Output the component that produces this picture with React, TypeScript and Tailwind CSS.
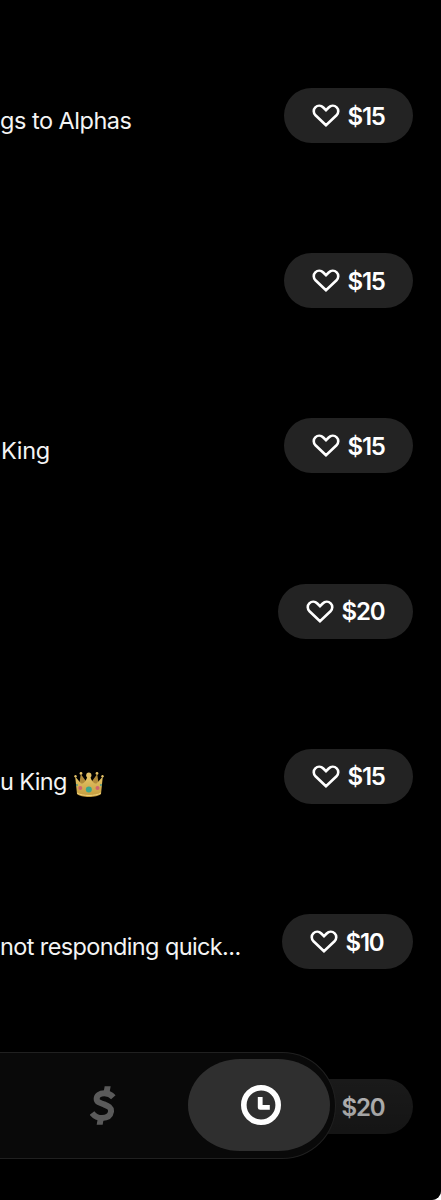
interface Payment {
  note?: string
  crown?: boolean
  tracking?: string
  amount: string
  pill: string
}

const payments: Payment[] = [
  { note: 'gs to Alphas', tracking: 'tracking-[-0.500px]', amount: '$15', pill: 'w-[129px]' },
  { amount: '$15', pill: 'w-[129px]' },
  { note: 'King', tracking: 'pl-px tracking-[-0.300px]', amount: '$15', pill: 'w-[129px]' },
  { amount: '$20', pill: 'w-[135px]' },
  { note: 'u King', tracking: 'tracking-[-0.650px]', crown: true, amount: '$15', pill: 'w-[129px]' },
  { note: 'not responding quick...', tracking: 'tracking-[-0.620px]', amount: '$10', pill: 'w-[131px]' },
  { amount: '$20', pill: 'w-[135px]' },
]

const HeartIcon = () => (
  <svg
    width="28"
    height="24"
    viewBox="0 0 28 24"
    fill="none"
    className="relative top-[0.500px] left-[0.500px] shrink-0"
    aria-hidden
  >
    <path
      d="M14 21.2 3.5 11.3C1.2 9 1.2 5.5 3.3 3.4c2.3-2.2 5.8-2.1 8 .1L14 6.2l2.7-2.7c2.2-2.2 5.7-2.3 8-.1 2.1 2.1 2.1 5.6-.2 7.9L14 21.2Z"
      stroke="currentColor"
      strokeWidth="2.6"
      strokeLinejoin="miter"
    />
  </svg>
)

const CrownIcon = () => (
  <svg width="30" height="26" viewBox="0 0 30 26" className="relative top-[2px] shrink-0" aria-hidden>
    <defs>
      <linearGradient id="crown-gold" x1="0" y1="0" x2="0" y2="1">
        <stop offset="0" stopColor="#e8c768" />
        <stop offset="1" stopColor="#c39a3c" />
      </linearGradient>
    </defs>
    <path d="M5 15 6.800 3 14 13h2l7.200-10L25 15Z" fill="#b08a3a" />
    <path
      d="M1.200 5.500 7 12.500c3 .5 5-2.500 6.800-8h2c1.800 5.500 3.800 8.500 6.800 8l6.200-7-1.800 17.500c-4 4-20 4-24 0Z"
      fill="url(#crown-gold)"
    />
    <path d="M3 22c5 3.300 19 3.300 24 0" fill="none" stroke="#f0d27c" strokeWidth="1" />
    <g fill="#e3c067">
      <circle cx="1.500" cy="5.200" r="1.200" />
      <circle cx="7" cy="2.400" r="1.400" />
      <circle cx="14.800" cy="4.200" r="2.600" />
      <circle cx="23" cy="2.400" r="1.400" />
      <circle cx="28.500" cy="5.200" r="1.200" />
    </g>
    <circle cx="14.800" cy="18.500" r="3" fill="#3da78c" />
    <circle cx="6.300" cy="17" r="2" fill="#cf6470" />
    <circle cx="23.500" cy="17" r="2" fill="#cf6470" />
    <circle cx="2.900" cy="14" r="1" fill="#48958a" />
    <circle cx="27" cy="14" r="1" fill="#48958a" />
  </svg>
)

const DollarIcon = () => (
  <svg width="26" height="39" viewBox="0 0 78 117" fill="none" aria-hidden>
    <path d="M44 1h18l-4 22H40ZM24 94h18l-4 22H20Z" fill="currentColor" />
    <path
      d="M70 34C62 25 52 22 43 22c-14 0-23 7-23 17 0 9 9 12 22 16 13 5 22 9 21 22-2 13-13 19-27 19-12 0-22-5-30-15"
      stroke="currentColor"
      strokeWidth="18"
    />
  </svg>
)

const ClockIcon = () => (
  <svg width="40" height="40" viewBox="0 0 40 40" fill="none" aria-hidden>
    <circle cx="20" cy="20" r="17.200" stroke="currentColor" strokeWidth="5.600" />
    <path d="M19.200 12v10.400h9.600" stroke="currentColor" strokeWidth="4.800" strokeLinejoin="round" />
  </svg>
)

const PaymentRow = ({ note, crown, tracking, amount, pill }: Payment) => (
  <li className="flex h-[165.200px] items-center justify-between pr-[28px]">
    <div className="flex items-center gap-[7px] pt-[11px]">
      {note && (
        <span className={`whitespace-nowrap text-[23.500px] leading-7 text-[#f4f4f4] ${tracking ?? ''}`}>
          {note}
        </span>
      )}
      {crown && <CrownIcon />}
    </div>
    <button
      type="button"
      className={`flex h-[55px] shrink-0 items-center gap-[8px] rounded-full bg-[#232323] pl-[27px] text-white ${pill}`}
    >
      <HeartIcon />
      <span className="pt-[2px] pl-[0.500px] text-[24px] leading-7 font-semibold tracking-[-1.200px]">
        {amount}
      </span>
    </button>
  </li>
)

const TabBar = () => (
  <nav className="absolute top-[1052px] left-0 flex h-[107px] w-[336px] items-center justify-end rounded-r-[54px] border-y-[1.500px] border-r-[1.500px] border-[#202020] bg-[#090909] pr-[5px]">
    <button type="button" aria-label="Money" className="mr-[72px] text-[#5a5a5a]">
      <DollarIcon />
    </button>
    <button
      type="button"
      aria-label="Activity"
      className="mb-px flex h-[92px] w-[142px] items-center justify-center rounded-[52px/46px] bg-[#2f2f2f] pl-[4px] text-white"
    >
      <ClockIcon />
    </button>
  </nav>
)

const App = () => (
  <div className="bg-white">
    <main className="relative h-[1200px] w-[441px] overflow-hidden rounded-br-[9px] bg-black font-['Inter',sans-serif]">
      <ul className="pt-[33px]">
        {payments.map((payment, index) => (
          <PaymentRow key={index} {...payment} />
        ))}
      </ul>
      <div className="absolute inset-x-0 top-[1040px] h-[160px] bg-linear-to-b from-black/15 to-black/60" />
      <TabBar />
    </main>
  </div>
)

export default App
